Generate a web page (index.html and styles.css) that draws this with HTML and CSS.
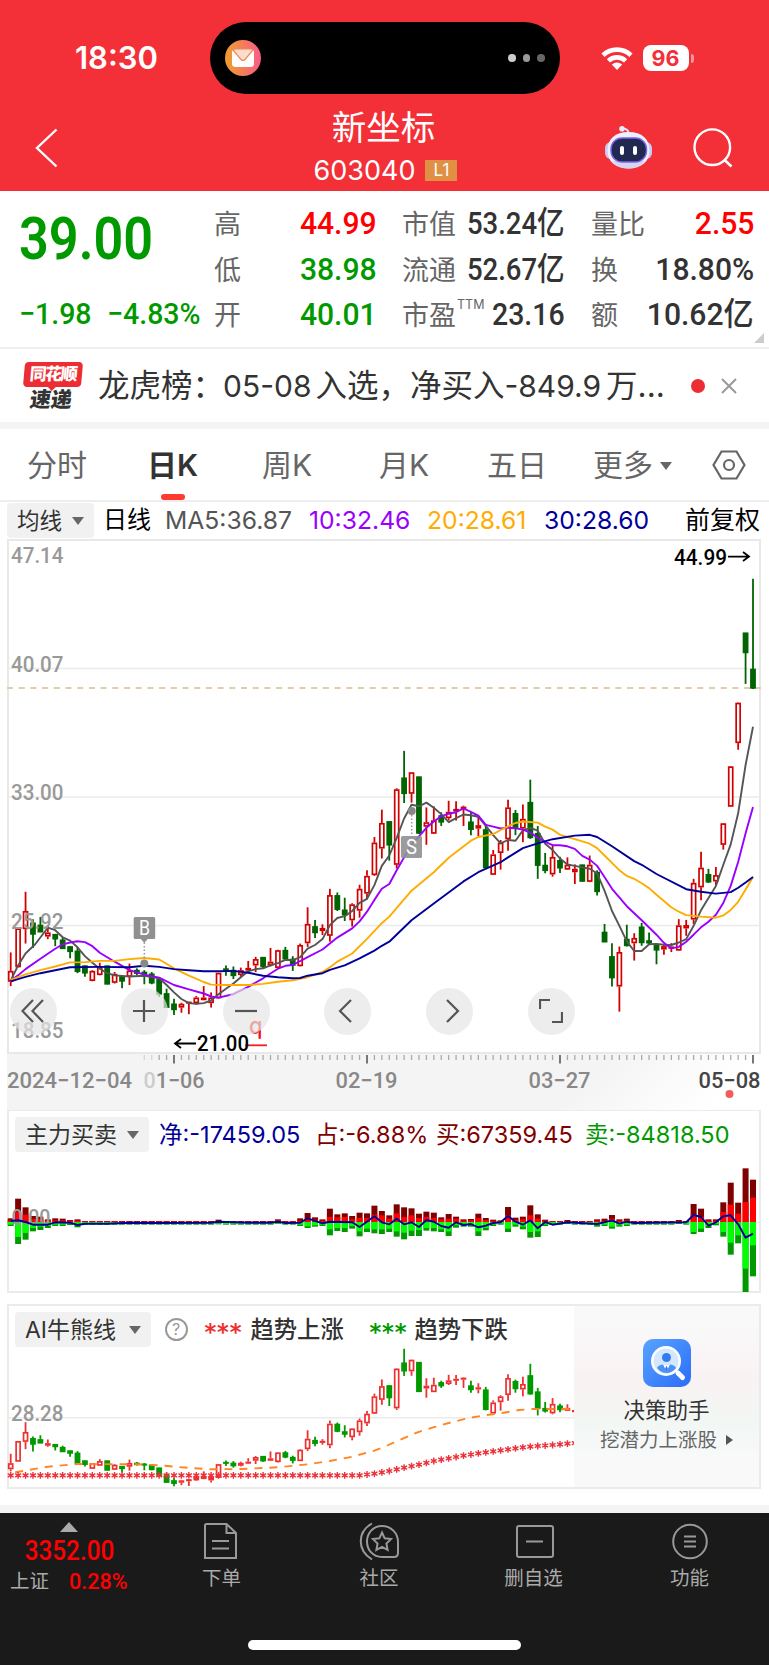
FILE: index.html
```
<!DOCTYPE html>
<html lang="zh-CN">
<head>
  <meta charset="UTF-8">
  <title>新坐标 603040</title>
  <link rel="stylesheet" href="styles.css">
</head>
<body>

  <header class="header">
    <div class="status">
      <span class="time">18:30</span>
      <div class="island">
        <svg width="36" height="36" viewBox="0 0 36 36">
          <defs>
            <linearGradient id="mail" x1="0" x2="1"><stop offset="0" stop-color="#eda02c"/><stop offset="1" stop-color="#fb5a86"/></linearGradient>
          </defs>
          <circle cx="18" cy="18" r="18" fill="url(#mail)"/>
          <rect x="7" y="9" width="22" height="18" rx="3.5" fill="#fff"/>
          <path d="M8 10 L16 19.5 Q18 21.5 20 19.5 L28 10 Q27 9 25 9 H11 Q9 9 8 10Z" fill="#fddccb" stroke="#f08a5c" stroke-width="1.2"/>
        </svg>
        <span class="dots"><i></i><i></i><i></i></span>
      </div>
      <svg class="wifi" width="32" height="24" viewBox="0 0 32 24">
        <g fill="none" stroke="#fff" stroke-width="4.6">
          <path d="M2 9.2 A20.5 20.5 0 0 1 30 9.2"/>
          <path d="M7.4 14.8 A12.5 12.5 0 0 1 24.6 14.8"/>
        </g>
        <path d="M16 24 L10.8 18.6 Q16 14.4 21.2 18.6Z" fill="#fff"/>
      </svg>
      <span class="battery">96</span><i class="nub"></i>
    </div>
    <nav class="nav">
      <svg class="back" width="24" height="40" viewBox="0 0 24 40"><path d="M21.5 1.5 L2 20 L21.5 38.5" fill="none" stroke="#fff" stroke-width="2.4"/></svg>
      <div class="stock">
        <h1>新坐标</h1>
        <p><span>603040</span><b>L1</b></p>
      </div>
      <div class="tools">
        <svg width="47" height="46" viewBox="0 0 47 46">
          <path d="M23.500 9 Q24 3.500 17 3.500" fill="none" stroke="#dfe0fa" stroke-width="2"/>
          <circle cx="17" cy="3.800" r="2.800" fill="#e9eafc"/>
          <rect x="0" y="17" width="47" height="17" rx="6" fill="#c9caf0"/>
          <path d="M23.500 7 C37 7 44.500 14 44.500 25.500 C44.500 37 36 43.500 23.500 43.500 C11 43.500 2.500 37 2.500 25.500 C2.500 14 10 7 23.500 7Z" fill="#eeeffd"/>
          <path d="M7 36 Q13 43.500 23.500 43.500 Q34 43.500 40 36Z" fill="#d4d5f4"/>
          <rect x="6" y="13" width="35.500" height="24" rx="11" fill="#222950" stroke="#7b62e8" stroke-width="1.400"/>
          <rect x="15" y="21" width="4" height="9" rx="2" fill="#fff"/>
          <rect x="28" y="21" width="4" height="9" rx="2" fill="#fff"/>
        </svg>
        <svg width="40" height="40" viewBox="0 0 40 40"><circle cx="19.300" cy="19.200" r="17.800" fill="none" stroke="#fff" stroke-width="2.400"/><path d="M31 31.500 L38.500 38.500" stroke="#fff" stroke-width="2.600"/></svg>
      </div>
    </nav>
  </header>

  <section class="quote">
    <div class="price">
      <strong class="num">39.00</strong>
      <div class="change"><span class="num">−1.98</span><span class="num">−4.83%</span></div>
    </div>
    <dl>
      <div><dt>高</dt><dd class="num red">44.99</dd></div>
      <div><dt>低</dt><dd class="num green">38.98</dd></div>
      <div><dt>开</dt><dd class="num green">40.01</dd></div>
    </dl>
    <dl class="cap">
      <div><dt>市值</dt><dd class="num">53.24亿</dd></div>
      <div><dt>流通</dt><dd class="num">52.67亿</dd></div>
      <div><dt>市盈<sup>TTM</sup></dt><dd class="num pe">23.16</dd></div>
    </dl>
    <dl>
      <div><dt>量比</dt><dd class="num red">2.55</dd></div>
      <div><dt>换</dt><dd class="num">18.80%</dd></div>
      <div><dt>额</dt><dd class="num">10.62亿</dd></div>
    </dl>
    <i class="corner"></i>
  </section>

  <section class="news">
    <div class="news-logo"><b>同花顺</b><em>速递</em></div>
    <p>龙虎榜：<span class="d1">05-08</span>入选，净买入<span class="d2">-849.9</span>万...</p>
    <i class="red-dot"></i>
    <svg width="16" height="16" viewBox="0 0 16 16"><path d="M1 1 L15 15 M15 1 L1 15" stroke="#999" stroke-width="2"/></svg>
  </section>

  <nav class="tabs">
    <a>分时</a><a class="active">日K</a><a>周K</a><a>月K</a><a>五日</a><a>更多<i class="caret"></i></a>
    <svg width="34" height="30" viewBox="0 0 34 30" fill="none" stroke="#666" stroke-width="2.200"><path d="M9.500 1.500 H24.500 L32.500 15 L24.500 28.500 H9.500 L1.500 15Z"/><circle cx="17" cy="15" r="5"/></svg>
  </nav>

  <section class="ma-row">
    <span class="pick">均线<i class="caret"></i></span>
    <span class="period">日线</span>
    <span class="ma5">MA5:36.87</span>
    <span class="ma10">10:32.46</span>
    <span class="ma20">20:28.61</span>
    <span class="ma30">30:28.60</span>
    <span class="adjust">前复权</span>
  </section>

  <section class="kline">
    <svg id="kline" width="754" height="514"></svg>
    <svg id="axis" width="754" height="56"></svg>
    <div class="controls">
      <button><svg viewBox="0 0 24 24"><path d="M12 1 L1.500 12 L12 23 M22 1 L11.500 12 L22 23"/></svg></button>
      <button><svg viewBox="0 0 24 24"><path d="M1 12 H23 M12 1 V23"/></svg></button>
      <button><svg viewBox="0 0 24 24"><path d="M1 12 H23"/></svg></button>
      <button><svg viewBox="0 0 24 24"><path d="M15 1 L4 12 L15 23"/></svg></button>
      <button><svg viewBox="0 0 24 24"><path d="M9 1 L20 12 L9 23"/></svg></button>
      <button><svg viewBox="0 0 24 24"><path d="M1 10 V1 H11 M13 23 H23 V13"/></svg></button>
    </div>
  </section>

  <section class="panel flow">
    <div class="legend">
      <span class="pick">主力买卖<i class="caret"></i></span>
      <span class="net">净:-17459.05</span><span class="share">占:-6.88%</span><span class="buy">买:67359.45</span><span class="sell">卖:-84818.50</span>
    </div>
    <svg id="flow" width="754" height="137"></svg>
  </section>

  <section class="panel trend">
    <div class="trend-main">
      <div class="legend">
        <span class="pick">AI牛熊线<i class="caret"></i></span>
        <span class="help">?</span>
        <span class="stars up">***</span><span class="name">趋势上涨</span>
        <span class="stars down">***</span><span class="name">趋势下跌</span>
      </div>
      <svg id="trend" width="567" height="139"></svg>
    </div>
    <aside class="helper">
      <svg width="48" height="48" viewBox="0 0 48 48">
        <defs><linearGradient id="blue" x1="0" y1="0" x2="1" y2="1"><stop offset="0" stop-color="#58a4ff"/><stop offset="1" stop-color="#2b6cf8"/></linearGradient></defs>
        <rect width="48" height="48" rx="10" fill="url(#blue)"/>
        <path d="M35 34 L39.500 38.500" stroke="#fff" stroke-width="5" stroke-linecap="round"/>
        <circle cx="23" cy="22" r="15" fill="#fff"/>
        <circle cx="23" cy="22" r="12.500" fill="#d3e7ff"/>
        <circle cx="23.500" cy="18.500" r="4.500" fill="#347bf0"/>
        <path d="M14 29 Q15 26 20 25.500 L23.500 31 L27 25.500 Q32 26 33 29 Q29 34 23.500 34 Q18 34 14 29Z" fill="#4b91f7"/>
        <path d="M20.500 26 L23.500 33 L26.500 26Z" fill="#fff"/><path d="M23.500 26.500 L25 30 L23.500 33 L22 30Z" fill="#347bf0"/>
      </svg>
      <b>决策助手</b>
      <span>挖潜力上涨股<i></i></span>
    </aside>
  </section>

  <footer class="bottom">
    <div class="index">
      <i class="up-arrow"></i>
      <strong class="num">3352.00</strong>
      <p><span>上证</span><b class="num">0.28%</b></p>
    </div>
    <a class="item"><svg width="40" height="40" viewBox="0 0 40 40"><path d="M4 3 H24.500 L34 12 V37 H3 V4.500 Q3 3 4.500 3Z M24.500 3 V12 H34 M10 20 H27 M10 27.500 H27"/></svg>下单</a>
    <a class="item"><svg width="40" height="40" viewBox="0 0 40 40"><path d="M13 2.500 C-2 11 -2 29 13 38.500 M23 5 C32 5 39 12 39 21 V32 Q39 36 35 36 H23 C14 36 8 29 8 20.500 C8 12 14 5 23 5Z M23 11.500 L25.700 17.300 L32 18.100 L27.400 22.500 L28.600 28.800 L23 25.800 L17.400 28.800 L18.600 22.500 L14 18.100 L20.300 17.300Z"/></svg>社区</a>
    <a class="item"><svg width="40" height="40" viewBox="0 0 40 40"><path d="M5 5 H37 Q39 5 39 7 V34 Q39 36 37 36 H5 Q3 36 3 34 V7 Q3 5 5 5Z M12 20.500 H29"/></svg>删自选</a>
    <a class="item"><svg width="40" height="40" viewBox="0 0 40 40"><circle cx="20" cy="20.500" r="16.800"/><path d="M14 15.500 H26 M14 20.500 H26 M14 25.500 H26"/></svg>功能</a>
    <i class="home"></i>
  </footer>

  <script src="chart.js"></script>
</body>
</html>
```
FILE: styles.css
```
* { box-sizing: border-box; margin: 0; padding: 0; }
body { width: 769px; background: #fff; color: #333; font-family: Inter, "Noto Sans CJK SC", sans-serif; }
svg { display: block; flex: none; }
i, em { font-style: normal; }
.num { font-family: Roboto, "Noto Sans CJK SC", sans-serif; font-weight: 500; }
.red { color: #f00 !important; }
.green { color: #090 !important; }
.caret { display: inline-block; border: 6px solid transparent; border-top: 8px solid #666; border-bottom: 0; }

/* header */
.header { height: 191px; background: #f33038; color: #fff; padding-top: 22px; }
.status { display: flex; align-items: center; height: 72px; padding-left: 75px; }
.time { width: 134.500px; font-size: 31px; font-weight: 600; line-height: 36px; }
.island { display: flex; align-items: center; justify-content: space-between; width: 350px; height: 72px; padding: 0 15px; border-radius: 36px; background: #000; }
.dots { display: flex; gap: 7px; }
.dots i { width: 7.500px; height: 7.500px; border-radius: 50%; background: #ccc; }
.dots i + i { background: #999; }
.dots i + i + i { background: #666; }
.wifi { margin: 0 10px 0 41px; }
.battery { width: 46px; height: 26px; border-radius: 8px; background: #fff; color: #f33038; font-size: 21.500px; font-weight: 700; line-height: 27px; text-align: center; }
.nub { width: 3px; height: 9px; margin-left: 2px; border-radius: 0 3px 3px 0; background: #f9979b; }
.nav { display: grid; grid-template-columns: 200px 1fr 200px; align-items: center; height: 97px; }
.back { margin: 9px 0 0 35px; }
.stock { text-align: center; padding-top: 11px; }
.stock h1 { font-size: 34.500px; font-weight: 400; line-height: 46px; height: 43px; margin-left: -2px; }
.stock p { display: flex; align-items: center; justify-content: center; gap: 10px; height: 44px; margin-left: 2px; font-size: 27px; }
.stock b { width: 32px; height: 21px; background: #e09045; font-size: 17px; font-weight: 400; line-height: 21px; text-align: center; }
.tools { display: flex; align-items: center; gap: 41px; padding: 9px 0 0 36px; }

/* quote */
.quote { display: flex; position: relative; height: 158px; padding-top: 10px; border-bottom: 2px solid #f0f0f0; }
.price { width: 214px; padding-left: 19px; color: #090; }
.price strong { display: block; height: 92px; font-size: 60px; font-weight: 600; line-height: 76px; transform: scaleX(.87); transform-origin: 0 0; }
.change { display: flex; font-size: 30px; line-height: 41px; }
.change .num { width: 88px; white-space: nowrap; transform: scaleX(.95); transform-origin: 0 0; }
.quote dl { width: 163px; }
.quote dl + dl { width: 163px; margin-left: 25px; }
.quote dl + dl + dl { margin-left: 26px; }
.quote dl div { display: flex; justify-content: space-between; height: 45.500px; white-space: nowrap; }
.quote dt { font-size: 27px; line-height: 48px; color: #666; }
.quote dt sup { display: inline-block; width: 0; margin-left: 1px; font-size: 12.500px; line-height: 0; vertical-align: 16px; }
.quote dd { margin-left: -20px; font-size: 32px; line-height: 45px; transform: scaleX(.94); transform-origin: 100% 0; }
.quote .cap dd { transform: scaleX(.86); }
.quote .cap .pe { transform: scaleX(.89); }
.corner { position: absolute; right: 5px; bottom: 4px; border-left: 10px solid transparent; border-bottom: 10px solid #ccc; }

/* news */
.news { display: flex; align-items: center; height: 80px; padding: 0 32px 0 24px; border-bottom: 7px solid #f4f4f4; }
.news-logo { position: relative; width: 58px; height: 48px; text-align: center; }
.news-logo b { display: block; height: 25px; border-radius: 4px; background: #ec2e34; color: #fff; font-size: 17px; font-weight: 900; letter-spacing: -1.500px; line-height: 25px; transform: skewX(-5deg); }
.news-logo b::after { content: ""; position: absolute; left: 25px; top: 25px; border: 4px solid transparent; border-top-color: #ec2e34; border-bottom: 0; }
.news-logo em { display: block; margin: 1px 4px 0 0; font-size: 21px; font-weight: 900; line-height: 23px; transform: skewX(-8deg); }
.news p { width: 590px; padding-left: 16px; font-size: 31.500px; line-height: 40px; white-space: nowrap; }
.news .d1 { font-size: 30px; margin: 0 4px 0 -1px; }
.news .d2 { font-size: 30px; margin-right: 5px; }
.red-dot { width: 14px; height: 14px; margin: 0 16px 0 auto; border-radius: 50%; background: #ec2e34; }

/* tabs */
.tabs { display: flex; align-items: center; position: relative; height: 73px; padding: 0 0 0 27px; border-bottom: 2px solid #eee; color: #666; font-size: 30px; line-height: 40px; }
.tabs a { width: 119px; white-space: nowrap; }
.tabs a:first-child { width: 120px; }
.tabs a:nth-child(2) { width: 115px; }
.tabs a:nth-child(3) { width: 117px; }
.tabs a:nth-child(4) { width: 108px; }
.tabs a:nth-child(5) { width: 106px; }
.tabs .active { position: relative; color: #333; font-weight: 600; }
.tabs .active::after { content: ""; position: absolute; left: 14px; bottom: -15px; width: 24px; height: 6px; border-radius: 3px; background: #ff3b30; }
.tabs .caret { margin-left: 7px; vertical-align: 6px; }

.ma-row { display: flex; align-items: flex-start; height: 38px; padding: 1px 9px 0 7px; font-size: 24.700px; line-height: 34px; white-space: nowrap; }
.pick { display: flex; align-items: center; justify-content: space-between; flex: none; height: 35px; padding: 0 10px; border-radius: 4px; background: #f1f1f1; font-size: 22.500px; }
.ma-row .pick { width: 87px; }
.period { width: 71px; padding-left: 9px; color: #000; font-size: 24px; }
.ma5 { width: 144px; color: #555; }
.ma10 { width: 118px; color: #90f; }
.ma20 { width: 117px; color: #ffac00; }
.ma30 { color: #009; }
.adjust { margin-left: auto; color: #000; font-size: 25px; }

/* charts */
.kline { position: relative; height: 569px; padding-left: 7px; }
.kline text, .panel text { font-family: Roboto, sans-serif; font-weight: 500; fill: #999; }
#kline { overflow: visible; }
.controls { display: flex; gap: 54.800px; position: absolute; left: 9.500px; top: 447.500px; }
.controls button { width: 47px; height: 47px; padding: 11.500px; border: 0; border-radius: 50%; background: rgba(230, 230, 230, .7); }
.controls button:first-child { margin-right: 9.500px; }
.controls svg { width: 24px; height: 24px; fill: none; stroke: #555; stroke-width: 2.200; }
.panel { width: 754px; height: 184px; margin-left: 7px; border: 2px solid #ebebeb; }
.legend { display: flex; align-items: center; height: 48px; padding: 0 0 1px 6px; font-size: 23.500px; line-height: 34px; white-space: nowrap; }
.legend .pick { font-size: 23px; }
.flow .pick { width: 134px; margin-right: 10px; }
.net { width: 156px; color: #009; }
.share { width: 121px; color: #800000; }
.buy { width: 149px; color: #800000; }
.sell { color: #090; }
.flow svg { margin: 1px 0 0 -2px; overflow: hidden; }
.trend { display: flex; height: 185px; margin-top: 11px; }
.trend .pick { width: 136px; margin-right: 13.500px; }
.trend-main { width: 565px; }
.trend-main > svg { margin: 1px 0 0 -2px; overflow: visible; }
.help { width: 23px; height: 23px; border: 2px solid #999; border-radius: 50%; color: #999; font-size: 16px; line-height: 19px; text-align: center; }
.stars { width: 59px; padding: 5px 0 0 17px; font-family: "DejaVu Sans", sans-serif; font-weight: 700; letter-spacing: .800px; line-height: 24px; font-size: 22.500px; }
.trend .up { color: #ee3030; }
.trend .down { color: #090; margin-left: 5px; }
.name { width: 97px; margin-left: 4px; font-size: 23.300px; font-weight: 500; }
.name + .stars + .name { margin-left: 3px; }
.helper { display: flex; flex-direction: column; align-items: center; width: 185px; padding-top: 33px; background: linear-gradient(#f9f9fa 10%, #f9f2f3 40%, #f2f7f4 65%, #f9f9fa 85%); }
.helper b { margin-top: 8px; font-size: 21.500px; font-weight: 400; line-height: 30px; }
.helper span { display: flex; align-items: center; color: #666; font-size: 19.500px; line-height: 30px; }
.helper i { margin-left: 9px; border: 5.500px solid transparent; border-left: 7px solid #555; border-right: 0; }

/* bottom bar */
.bottom { display: flex; position: relative; height: 160px; margin-top: 16px; border-top: 8px solid #f4f4f4; background: #1a1a1a; color: #aaa; }
.index { width: 139px; text-align: center; }
.up-arrow { display: block; width: 0; margin: 9px auto 0 60px; border: 9px solid transparent; border-top: 0; border-bottom: 10px solid #aaa; }
.index strong { display: block; height: 35px; color: #f00; font-size: 27px; line-height: 39px; transform: scaleX(.9); }
.index p { display: flex; padding-left: 10px; font-size: 19.500px; line-height: 29px; }
.index p b { margin-left: 20px; color: #f00; font-size: 22.500px; transform: scaleX(.96); transform-origin: 0 0; }
.item { display: flex; flex-direction: column; align-items: center; width: 150px; padding-top: 8px; font-size: 19.500px; line-height: 35px; }
.item:nth-child(2) { width: 165px; }
.item:nth-child(4) { width: 159px; }
.item:nth-child(5) { width: 153px; }
.item svg { fill: none; stroke: #999; stroke-width: 2; }
.home { position: absolute; left: 248px; bottom: 15px; width: 273px; height: 10px; border-radius: 5px; background: #fff; }
```
FILE: chart.js
```
const STEP = 7.423;
const X = i => 3.7 + STEP * i;

// [high, body top, body bottom, low, rising]
const candles = [
  [1142,1193,1220,1233,1],[1078,1078,1181,1183,1],[978,1031,1078,1118,1],[1052,1062,1093,1130,0],[1046,1068,1087,1087,0],
  [1068,1089,1098,1106,1],[1092,1093,1106,1125,0],[1100,1108,1132,1132,0],[1125,1126,1140,1158,0],[1128,1138,1194,1198,0],
  [1177,1178,1198,1208,0],[1190,1193,1218,1220,1],[1170,1182,1202,1204,1],[1178,1178,1228,1228,0],[1195,1201,1223,1226,1],
  [1205,1207,1220,1239,0],[1172,1192,1207,1230,1],[1185,1190,1199,1203,0],[1190,1195,1201,1228,0],[1195,1200,1225,1228,0],
  [1215,1215,1255,1262,0],[1240,1253,1291,1291,0],[1267,1281,1297,1311,0],[1278,1282,1290,1305,1],[1275,1276,1279,1309,1],
  [1260,1265,1278,1283,1],[1233,1265,1270,1270,1],[1250,1265,1278,1291,1],[1197,1198,1265,1267,1],[1177,1186,1191,1205,0],
  [1180,1190,1205,1214,0],[1183,1191,1202,1208,1],[1165,1185,1190,1195,1],[1154,1161,1176,1195,1],[1155,1155,1180,1184,0],
  [1130,1168,1176,1180,1],[1135,1137,1183,1187,1],[1127,1136,1160,1165,0],[1152,1160,1177,1192,0],[1118,1123,1178,1180,1],
  [1020,1066,1116,1127,1],[1054,1072,1089,1103,0],[1066,1077,1083,1095,1],[970,988,1096,1113,1],[980,988,1026,1030,0],
  [994,1027,1041,1057,0],[1009,1013,1054,1072,1],[959,971,1028,1048,1],[920,936,982,998,1],[830,846,932,935,1],
  [756,793,860,888,1],[788,788,852,894,0],[698,702,904,915,1],[597,670,713,738,0],[655,656,712,737,1],
  [667,667,820,822,0],[750,791,801,851,1],[747,786,820,822,1],[763,772,790,800,0],[732,763,778,785,1],
  [733,755,760,785,1],[745,749,753,800,1],[763,789,810,825,0],[776,799,806,828,1],[795,810,913,917,0],
  [865,878,931,933,1],[838,846,872,918,1],[729,751,835,867,1],[757,766,805,825,0],[742,782,806,844,1],
  [675,736,832,835,0],[800,820,907,943,0],[873,906,921,928,0],[853,885,930,937,1],[883,893,914,927,0],
  [885,906,917,919,1],[904,917,924,957,1],[905,905,950,951,0],[880,906,950,952,1],[920,925,978,988,0],
  [1065,1087,1114,1114,0],[1117,1153,1211,1234,0],[1126,1142,1233,1302,1],[1067,1106,1124,1126,0],[1090,1104,1116,1164,1],
  [1062,1073,1116,1124,0],[1088,1110,1117,1120,0],[1119,1120,1136,1174,0],[1120,1126,1133,1148,1],[1117,1127,1131,1141,1],
  [1052,1070,1136,1138,1],[1054,1069,1076,1097,1],[943,955,1052,1065,1],[870,914,965,1001,1],[916,931,952,954,0],
  [911,934,949,961,1],[792,794,850,864,1],[638,640,747,748,1],[466,468,575,594,1],[278,278,332,416,0],[132,376,428,430,0]
];

// moving averages: index, value, index, value ...
const averages = [
  ['#555', [0,1218,1,1177,2,1145,3.3,1120,5,1075,6,1082,7,1101,8,1110,9,1128,10,1152,11,1170,12,1186,13,1198,14,1204,16,1207,18,1205,20,1212,21,1230,22,1250,23,1268,24,1279,25,1281,26,1279,27,1272,28,1255,29,1240,30,1226,31,1209,32,1193,33,1187,34,1185,35,1177,36,1171,37,1162,38,1163,39,1155,40,1132,41,1122,42,1106,43,1068,44,1049,45,1044,46,1030,47,1008,48,997,49,960,50,908,51,880,52,832,53,780,54,743,55,747,56,737,57,751,58,768,59,790,60,779,61,769,62,771,63,775,64,800,65,825,66,847,67,838,68,840,69,812,70,805,71,813,72,848,73,865,74,888,75,904,76,908,77,912,78,916,79,928,80,975,81,1030,82,1070,83,1112,84,1138,85,1138,86,1120,87,1119,88,1121,89,1122,90,1115,91,1106,92,1070,93,1028,94,995,95,962,96,905,97,850,98,765,99,635,100,532]],
  ['#90f', [0,1218,1,1204,2,1187,4,1159,6,1132,7,1120,8,1115,9,1112,10,1114,11,1125,12,1143,14,1167,16,1190,18,1202,20,1210,22,1230,24,1242,26,1253,27,1261,28,1264,30,1255,32,1235,34,1212,36,1186,37,1178,38,1176,40,1155,42,1134,44,1102,46,1077,47,1058,48,1032,49,1000,50,970,51,957,52,920,53,885,54,850,55,828,56,805,57,788,58,774,59,767,60,763,61,753,62,762,63,772,64,797,65,802,66,807,67,805,68,806,69,810,70,818,71,832,72,843,73,852,74,852,75,855,76,862,77,881,78,891,79,908,80,938,81,970,83,1017,85,1055,87,1094,88,1116,89,1131,90,1127,91,1113,92,1094,93,1074,94,1059,95,1040,96,1008,97,962,98,897,99,820,100,749]],
  ['#ffac00', [0,1216,2,1201,4,1190,6,1180,8,1169,10,1168,12,1165,14,1165,16,1160,18,1157,20,1161,22,1185,24,1205,26,1222,27,1229,29,1230,32,1230,34,1227,36,1221,38,1217,40,1209,42,1195,43,1182,44,1167,46,1145,48,1105,50,1063,51,1045,54,975,57,925,59,886,62,840,63,830,65,822,66,811,67,801,68,792,69,788,71,791,72,802,73,810,74,824,76,836,78,848,79,860,80,880,81,900,82,920,83,935,84,943,85,955,86,968,87,986,88,1003,89,1020,90,1032,91,1041,93,1045,95,1048,96,1042,97,1027,98,1005,99,972,100,938]],
  ['#009', [0,1220,2,1208,4,1198,6,1190,8,1182,12,1181,16,1182,18,1178,20,1181,22,1187,24,1190,26,1193,28,1193,30,1192,32,1197,34,1205,36,1209,38,1212,39,1211,40,1205,42,1198,43,1189,45,1177,47,1158,49,1137,50,1124,51,1113,54,1055,57,1010,61,950,63,925,66,898,67,885,69,860,71,847,73,836,76,826,78,824,79,830,81,855,84,895,85,905,87,930,91,971,93,978,95,983,97,979,98,967,99,953,100,938]]
];

function line(x1, y1, x2, y2, color, w = 2, extra = '') {
  return `<path d="M${x1} ${y1}L${x2} ${y2}" stroke="${color}" stroke-width="${w}" ${extra}/>`;
}
function rect(x, y, w, h, color, extra = '') {
  return `<rect x="${x}" y="${y}" width="${w}" height="${h}" fill="${color}" ${extra}/>`;
}
function label(x, y, str, width, style = '', size = 22) {
  return `<text x="${x}" y="${y}" font-size="${size}" textLength="${width}" lengthAdjust="spacingAndGlyphs" style="${style}">${str}</text>`;
}
function curve(pts, Y, color, extra = '') {
  let d = '';
  for (let k = 0; k < pts.length; k += 2) d += (k ? 'L' : 'M') + X(pts[k]).toFixed(1) + ' ' + Y(pts[k + 1]).toFixed(1);
  return `<path d="${d}" fill="none" stroke="${color}" stroke-width="1.9" stroke-linejoin="round" ${extra}/>`;
}
function candle(c, i, Y, red, green) {
  const [h, t, b, l, up] = c;
  const x = X(i), color = up ? red : green;
  const top = Y(t) - .4, height = Math.max(Y(b) - top + .4, 2);
  let s = '';
  if (up) {
    s += line(x, Y(h), x, top, color, 1.8) + line(x, top + height, x, Y(l), color, 1.8);
    s += rect(x - 2, top + .8, 4, Math.max(height - 1.6, .4), '#fff', `stroke="${color}" stroke-width="1.7"`);
  } else {
    s += line(x, Y(h), x, Y(l), color, 1.8) + rect(x - 2.9, top, 5.8, height, color);
  }
  return s;
}

function drawKline() {
  const Y = v => (v - 27) * .3699;
  let s = '';
  [128.5, 257, 385.5].forEach(y => s += line(0, y, 754, y, '#ebebeb', 1.5));
  s += rect(1, 0, 752, 513, 'none', 'stroke="#e8e8e8" stroke-width="2"');
  s += line(0, 148, 754, 148, '#e2cda8', 2, 'stroke-dasharray="6 5.7"');
  candles.forEach((c, i) => s += candle(c, i, Y, '#d20000', '#006400'));
  averages.forEach(([color, pts]) => s += curve(pts, Y, color));
  [['47.14', 22.5], ['40.07', 131.5], ['33.00', 260], ['25.92', 388.5], ['18.85', 497.5]]
    .forEach(([t, y]) => s += label(4, y, t, 52.5));
  // trade markers
  s += line(137.3, 399, 137.3, 420, '#999', 1.5, 'stroke-dasharray="1.5 2"');
  s += '<circle cx="137.3" cy="423.500" r="4" fill="#888"/>' + rect(126.7, 377, 21.5, 22, '#909090', 'rx="1.5"') + '<path d="M133 398L137.300 403L141.600 398Z" fill="#909090"/>';
  s += label(132, 395, 'B', 11, 'fill:#fff;font-weight:400', 20);
  s += '<circle cx="404.700" cy="271" r="4" fill="#888"/>' + line(404.7, 275, 404.7, 294, '#999', 1.5, 'stroke-dasharray="1.5 2"');
  s += rect(394, 296, 21, 22, '#909090', 'rx="1.5" opacity=".9"') + label(399, 314, 'S', 11, 'fill:#fff;font-weight:400', 20);
  // extremes
  s += label(667, 25, '44.99', 53, 'fill:#000') + '<path d="M721 16.600H742M736 12L742 16.600L736 21" fill="none" stroke="#000" stroke-width="1.800"/>';
  s += label(242, 494, 'q', 13.5, 'fill:#ee1010;font-weight:500;font-family:Inter', 24) + line(238, 505.3, 260, 505.3, '#ee2020', 1.8);
  s += label(190, 511, '21.00', 52, 'fill:#000') + '<path d="M189 503.500H168M174 499L168 503.500L174 508" fill="none" stroke="#000" stroke-width="1.800"/>';
  document.getElementById('kline').innerHTML = s;
}

function drawAxis() {
  let s = '<defs><linearGradient id="fade" x1="0" x2="1" y1="0" y2=".08"><stop offset="0" stop-color="#f4f4f4"/><stop offset=".8" stop-color="#f4f4f4"/><stop offset="1" stop-color="#fff"/></linearGradient></defs>';
  s += rect(0, 0, 754, 56, 'url(#fade)');
  for (let i = 18; i <= 100; i++) {
    const major = (i - 22) % 26 === 0;
    s += line(X(i), 1, X(i), major ? 9.5 : 6, major ? '#777' : '#aaa', major ? 2 : 1.3, i < 20 ? 'opacity=".4"' : '');
  }
  s += label(0, 34, '2024−12−04', 125, 'fill:#888') + label(136.5, 34, '<tspan fill="#ccc">0</tspan>1−06', 61, 'fill:#888');
  s += label(328.5, 34, '02−19', 62, 'fill:#888') + label(521.5, 34, '03−27', 62, 'fill:#888') + label(691.5, 34, '05−08', 62, 'fill:#444');
  s += '<circle cx="722.500" cy="40" r="4" fill="#f25c5c"/>';
  document.getElementById('axis').innerHTML = s;
}

function drawFlow() {
  // day: [buy total, buy large, sell large, sell total]
  const days = {
    0:[11,5,8,12],1:[70,30,45,66],2:[44,22,33,53],3:[18,9,18,28],4:[16,8,14,24],5:[8,4,12,18],6:[11,5,8,12],7:[10,5,8,12],8:[6,4,6,9],9:[8,4,10,16],
    28:[7,3,5,7],36:[8,5,5,6],39:[11,4,8,12],40:[27,10,13,18],41:[14,7,10,14],42:[8,4,8,12],43:[40,15,22,40],44:[23,14,18,27],45:[26,15,18,30],46:[18,8,12,20],
    47:[28,12,28,43],48:[26,12,20,30],49:[49,22,22,34],50:[33,20,22,36],51:[20,10,20,30],52:[53,26,28,44],53:[44,15,32,52],54:[41,20,26,42],55:[25,12,24,42],
    56:[31,15,18,26],57:[28,12,18,28],58:[14,8,22,30],59:[24,9,28,42],60:[16,10,10,17],61:[8,4,8,14],62:[9,5,8,14],63:[25,12,28,42],64:[12,6,18,25],65:[7,4,8,12],
    66:[5,3,5,8],67:[45,20,20,30],68:[13,7,8,14],69:[16,8,14,22],70:[50,20,30,47],71:[23,10,28,45],72:[7,4,8,12],75:[6,3,4,6],79:[8,4,8,14],80:[10,4,8,12],
    81:[21,10,14,20],82:[8,4,10,14],83:[10,5,8,12],90:[6,3,4,6],92:[54,22,30,36],93:[40,16,20,30],94:[8,4,12,18],95:[8,4,6,10],96:[59,30,30,44],97:[118,52,62,98],
    98:[58,25,40,64],99:[161,60,140,210],100:[127,73,70,163]
  };
  const zero = 62, k = 1 / 3;
  let s = line(0, zero + .5, 754, zero + .5, '#ebebeb', 1.5);
  for (let i = 0; i <= 100; i++) {
    const [bt, bl, sl, st] = days[i] || [3, 2, 6, 8];
    const x = X(i) - 3;
    s += rect(x, zero - bt * k, 6, bt * k, '#800000') + rect(x, zero - bl * k, 6, bl * k, '#f00');
    s += rect(x, zero, 6, st * k, '#090') + rect(x, zero, 6, sl * k, '#0f0');
  }
  const net = [0,362,1,360,2,365,3,373,5,373,6,366,8,367,9,374,10,370,13,370,16,367,20,368,27,367,28,364,32,367,35,367,36,364,37,368,39,367,40,354,42,369,43,364,46,366,47,380,49,348,50,366,51,372,52,355,53,372,54,366,55,380,56,359,57,364,58,377,59,382,60,366,61,374,62,371,63,381,64,376,65,368,66,366,67,347,68,364,69,373,70,360,71,384,72,365,73,373,75,366,79,371,81,360,82,370,83,364,84,368,91,366,92,344,93,350,94,376,95,366,96,348,97,345,98,372,99,412,100,400];
  s += label(4.5, 65, '0.00', 39);
  s += curve(net, v => zero + (v - 365) * k, '#009');
  document.getElementById('flow').innerHTML = s;
}

function drawTrend() {
  const R = v => v / 3 - 60;                       // panel rows
  const Y = v => R(222 + (v - 702) * .578);        // price rows
  let s = line(0, R(368), 567, R(368), '#ebebeb', 1.5) + label(4, R(377), '28.28', 52.5);
  candles.slice(0, 77).forEach((c, i) => s += candle(c, i, Y, '#ee3030', '#090'));
  s += curve([.6,532,5,515,9,507,17,508,20,511,23,517,27,523,31,522,36,517,40,508,43,498,46,485,49,467,50.5,454,52.3,436,54.8,412,56.8,398,59,384,61.3,371,63.8,361,66.2,354,68.5,345,70.3,342,75.8,342], R, '#ff8522', 'stroke-dasharray="8 7"');
  const base = [0,541,47,541,49,536,51,528,53,518,55,509,57,498,59,490,61,482,63,475,65,469,67,463,69,457,71,453,73,450,75,446,77,443];
  for (let i = 0; i < 77; i++) {
    let k = 0;
    while (base[k + 2] < i) k += 2;
    const v = base[k + 1] + (base[k + 3] - base[k + 1]) * (i - base[k]) / (base[k + 2] - base[k]);
    const x = X(i), y = R(v);
    s += `<path d="M${x} ${y - 3.4}V${y + 3.4}M${x - 3} ${y - 1.7}L${x + 3} ${y + 1.7}M${x - 3} ${y + 1.7}L${x + 3} ${y - 1.7}" stroke="#ee3038" stroke-width="1.4"/>`;
  }
  document.getElementById('trend').innerHTML = s;
}

drawKline();
drawAxis();
drawFlow();
drawTrend();
```
